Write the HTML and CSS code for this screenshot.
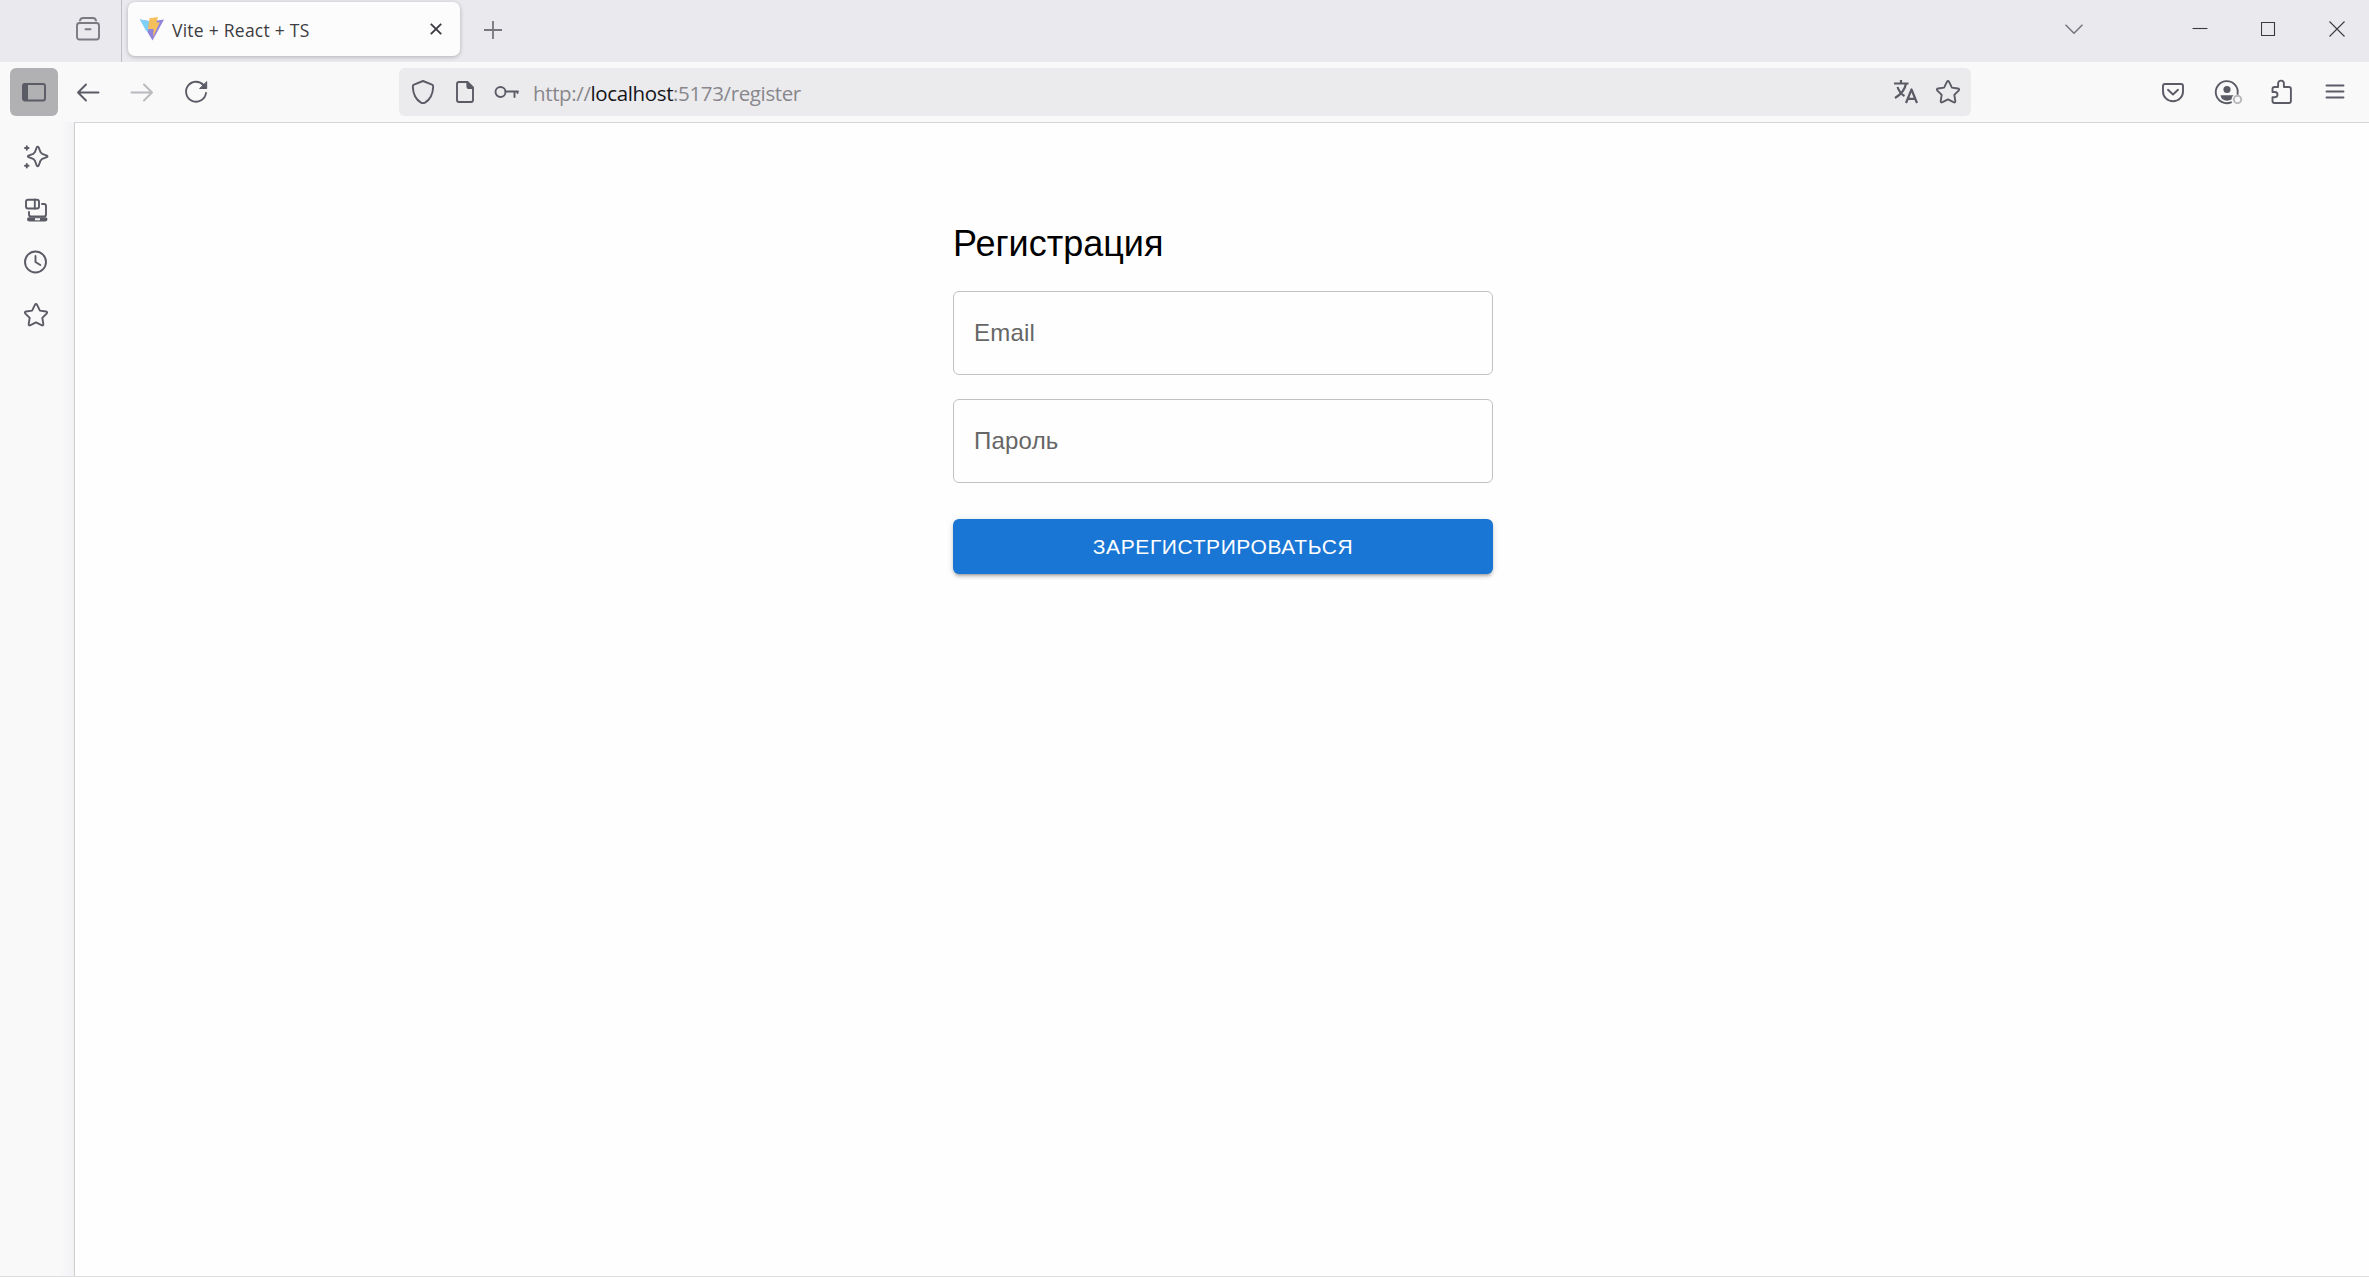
FILE: index.html
```html
<!DOCTYPE html>
<html lang="ru">
<head>
<meta charset="utf-8">
<title>Vite + React + TS</title>
<link rel="stylesheet" href="styles.css">
</head>
<body>
<div class="window">
  <header class="tabstrip">
    <div class="view-btn">
      <svg class="icon muted" viewBox="0 0 24 24"><path d="M4 3.600C4.400 1.900 5.500 1 7 1h10c1.500 0 2.600.9 3 2.600"/><rect x="1" y="6" width="22" height="16.500" rx="2.500"/><path d="M9.500 12.300h5"/></svg>
    </div>
    <div class="tab">
      <svg class="vite" viewBox="0 0 24 24"><path fill="#9183dc" d="M0 2.500l11 2 13-2L12.500 23.500z"/><path fill="#7fd0f8" d="M0 2.500l9 1.600-1 10.400-2.200-1z"/><path fill="#f5c05c" d="M9.500 1.300L18 0l-1.600 5.500 3.400-.3-6.800 14.800.6-8H8z"/></svg>
      <span class="tab-title">Vite + React + TS</span>
      <svg class="tab-close" viewBox="0 0 12 12"><path d="M.8.8l10.400 10.400M11.200.8L.8 11.200"/></svg>
    </div>
    <svg class="new-tab" viewBox="0 0 18 18"><path d="M9 0v18M0 9h18"/></svg>
    <div class="spacer"></div>
    <svg class="chevron" viewBox="0 0 18 10"><path d="M.5.700L9 9.200 17.500.7"/></svg>
    <div class="win-btn"><svg class="win-icon" viewBox="0 0 16 16"><path d="M.5 7.500h15"/></svg></div>
    <div class="win-btn"><svg class="win-icon" viewBox="0 0 16 16"><path d="M.5 1.500h13v13H.5z"/></svg></div>
    <div class="win-btn last"><svg class="win-icon" viewBox="0 0 16 16"><path d="M.5.500l15 15M15.500.500l-15 15"/></svg></div>
  </header>

  <nav class="toolbar">
    <div class="btn active"><svg class="icon" viewBox="0 0 24 24"><rect x="1" y="4" width="22" height="16.500" rx="2"/><path class="solid" d="M1 5q0-1.500 2-1.500h2.500v17H3q-2 0-2-1.500z"/></svg></div>
    <div class="btn"><svg class="icon" viewBox="0 0 24 24"><path d="M22.500 12.500H2M10 4.500l-8 8 8 8"/></svg></div>
    <div class="btn disabled"><svg class="icon" viewBox="0 0 24 24"><path d="M1.500 12.500H22M14 4.500l8 8-8 8"/></svg></div>
    <div class="btn"><svg class="icon" viewBox="0 0 24 24"><path d="M19.500 5A10 10 0 1 0 22 13"/><path class="solid" d="M22.700 2v6.500H16z"/></svg></div>
    <div class="urlbar">
      <div class="url-btn"><svg class="icon" viewBox="0 0 24 24"><path d="M12 1L21 4.600q1.300.5 1.200 2c-.3 8-3.200 13-8.200 16q-2 1-4 0c-5-3-7.900-8-8.200-16q-.1-1.500 1.200-2z"/></svg></div>
      <div class="url-btn"><svg class="icon" viewBox="0 0 24 24"><path d="M14.500 2H6Q4 2 4 4v16q0 2 2 2h12q2 0 2-2V7.500z"/><path class="solid" d="M14 2l6.500 6.500H15q-1 0-1-1z"/></svg></div>
      <div class="url-btn"><svg class="icon" viewBox="0 0 24 24"><circle cx="5.500" cy="12" r="5"/><path d="M10.500 11.500h12.500M19.500 12v5M22.500 12v1"/></svg></div>
      <span class="url">http://<span class="host">localhost</span>:5173/register</span>
      <div class="url-btn"><svg class="icon" viewBox="0 0 24 24"><path class="thick" d="M0 3.500h14.500M7 0v3.500M3.500 7C5 11.500 7 14 10.500 16M12 3.500C11 10 7.500 14 1 18"/><path class="thick" d="M12 23l5.500-13.500L23 23M13.500 18.800h8"/></svg></div>
      <div class="url-btn"><svg class="icon" viewBox="0 0 24 24"><path d="M10.900 1.900q1.100-1.800 2.200 0l2.800 5.700 6 .9q2.100.5.700 2.100l-4.300 4.300 1 6q.2 2.200-1.800 1.300L12 19.400l-5.500 2.800q-2 .9-1.800-1.300l1-6-4.300-4.300Q0 9 2.100 8.500l6-.9z"/></svg></div>
    </div>
    <div class="spacer"></div>
    <div class="btn"><svg class="icon" viewBox="0 0 24 24"><path d="M4 4h16q2 0 2 2v5.500a10 9.800 0 0 1-20 0V6q0-2 2-2z"/><path d="M7 9.800l5 4.700 5-4.700"/></svg></div>
    <div class="btn"><svg class="icon wide" viewBox="0 0 28 24"><path d="M22.600 14A11 11 0 1 0 16 22.300"/><circle class="fill" cx="12" cy="9.500" r="3.600"/><path class="fill" d="M5.500 15.200h13q-.7 1-1.500 1.800l-.5 2.600q-5 2.400-9.500-.6-1-1.500-1.500-3.800z"/><circle class="badge" cx="22.500" cy="19.500" r="3.700"/></svg></div>
    <div class="btn"><svg class="icon" viewBox="0 0 24 24"><path d="M3.500 12V9q0-2 2-2h3.600V3.500a2.900 2.900 0 0 1 5.800 0V7h5q2 0 2 2v12q0 2-2 2h-14.400q-2 0-2-2v-3.800h2.400a2.600 2.600 0 0 0 0-5.200z"/></svg></div>
    <div class="btn"><svg class="icon" viewBox="0 0 24 24"><path d="M3.500 5.500h17M3.500 11.500h17M3.500 17.500h17"/></svg></div>
  </nav>

  <div class="body">
    <aside class="sidebar">
      <svg class="icon" viewBox="0 0 24 24"><path d="M12.700 2.500q1-1.800 2 0l1.800 4.700 1.700 1.700 4.700 1.800q1.300.7 0 1.400l-4.700 1.800-1.700 1.700-1.800 4.900q-1 1.600-2 0l-1.800-4.900-1.700-1.700-4.700-1.800q-1.300-.7 0-1.400l4.700-1.800 1.700-1.700z"/><path d="M2.800 1.200v3.600M1 3h3.600M2.800 19v3.600M1 20.800h3.600"/></svg>
      <svg class="icon" viewBox="0 0 24 24"><rect x="2" y="1.700" width="13" height="8.800" rx="2"/><path d="M10.800 1.500v9M18 6h2q2 0 2 2v8.500q0 2-2 2H7q-2 0-2-2V14"/><path class="fill" fill-rule="evenodd" d="M5.500 19.200h16q2 0 2 2t-2 2.200h-16q-2.500 0-2.500-2.200t2.500-2zM11 20.300v2h5v-2z"/></svg>
      <svg class="icon" viewBox="0 0 24 24"><circle cx="11.500" cy="12" r="10.500"/><path d="M11.500 6v6l4.800 3"/></svg>
      <svg class="icon" viewBox="0 0 24 24"><path d="M10.900 1.900q1.100-1.800 2.200 0l2.800 5.700 6 .9q2.100.5.700 2.100l-4.300 4.300 1 6q.2 2.200-1.800 1.300L12 19.400l-5.500 2.800q-2 .9-1.800-1.300l1-6-4.300-4.300Q0 9 2.100 8.500l6-.9z"/></svg>
    </aside>
    <main class="page">
      <form class="form">
        <h1 class="heading">Регистрация</h1>
        <label class="field">Email</label>
        <label class="field">Пароль</label>
        <button class="submit" type="button">Зарегистрироваться</button>
      </form>
    </main>
  </div>
</div>
</body>
</html>
```
FILE: styles.css
```css
* { box-sizing: border-box; }
body { margin: 0; background: #f9f9fa; font-family: "Open Sans", "Noto Sans", sans-serif; }
.window { display: flex; flex-direction: column; height: 1277px; overflow: hidden; border-bottom: 1px solid #dededf; }
svg { display: block; flex: none; fill: none; }
.spacer { flex: 1; }

.icon { width: 24px; height: 24px; stroke: #5b5b66; stroke-width: 1.9; stroke-linejoin: round; stroke-linecap: round; overflow: visible; }
.icon.wide { width: 28px; margin-left: 4px; }
.icon.muted { stroke: #7b7a82; }
.icon .solid { fill: #5b5b66; stroke-width: 1; }
.icon .fill { fill: #5b5b66; stroke: none; }
.icon .thick { stroke-width: 2.2; stroke-linecap: butt; }
.icon .badge { stroke: #b9b9bd; stroke-width: 2; }

.tabstrip { display: flex; height: 62px; flex: none; background: #eae9ee; }
.view-btn { width: 122px; padding: 17px 0 0 76px; border-right: 1px solid #bfbec6; }
.tab { display: flex; align-items: center; width: 332px; height: 54px; margin: 2px 0 0 6px; padding: 0 18px 0 12px; border-radius: 7px; background: #fcfcfc; box-shadow: 0 1px 4px rgba(0, 0, 0, .25); }
.vite { width: 24px; height: 24px; }
.tab-title { flex: 1; padding-top: 1px; margin-left: 8px; font-size: 17.500px; letter-spacing: .25px; line-height: 24px; color: #3d3c42; white-space: nowrap; }
.tab-close { width: 12px; height: 12px; stroke: #3d3c42; stroke-width: 1.9; }
.new-tab { width: 18px; height: 18px; margin: 21px 0 0 23.500px; stroke: #77767d; stroke-width: 1.8; }
.chevron { width: 18px; height: 10px; margin: 24px 82px 0 0; stroke: #77767d; stroke-width: 1.6; }
.win-btn { display: flex; justify-content: center; width: 69px; padding-top: 21px; }
.win-btn.last { width: 66px; padding-left: 2px; }
.win-icon { width: 16px; height: 16px; stroke: #3b3a40; stroke-width: 1.1; }

.toolbar { display: flex; align-items: center; gap: 6px; flex: none; height: 60px; padding: 0 10px; }
.btn { display: flex; align-items: center; justify-content: center; width: 48px; height: 48px; border-radius: 6px; }
.btn.active { background: #b1b1b4; }
.btn.disabled { opacity: .4; }
.urlbar { display: flex; align-items: center; width: 1572px; height: 48px; margin-left: 173px; padding: 0 2px 0 3px; border-radius: 6px; background: #ebebed; }
.url-btn { display: flex; justify-content: center; width: 42px; }
.url { flex: 1; padding: 2px 0 0 5px; font-size: 20.500px; letter-spacing: -.37px; line-height: 28px; color: #88878c; white-space: nowrap; }
.host { color: #15141a; }

.body { display: flex; flex: 1; min-height: 0; }
.sidebar { display: flex; flex-direction: column; gap: 28.700px; width: 74px; flex: none; padding: 23px 0 0 24px; background: linear-gradient(90deg, #f9f9fa 80%, #f2f2f5); }
.page { flex: 1; padding: 96px 0 0 2px; border-top: 1px solid #d6d6da; border-left: 1px solid #cdcdd0; background: #fefefe; }
.form { display: flex; flex-direction: column; width: 540px; margin: 0 auto; font-family: "Liberation Sans", Arial, sans-serif; }
.heading { margin: 0 0 24px; padding-top: 1px; font-size: 36px; font-weight: 400; line-height: 47px; color: #000; }
.field { height: 84px; margin-bottom: 24px; padding: 0 20px; border: 1px solid #c2c2c2; border-radius: 6px; font-size: 24px; letter-spacing: .22px; line-height: 82px; color: #666; }
.submit { height: 55px; margin-top: 12px; padding: 0; border: 0; border-radius: 6px; background: #1976d4; color: #fff; font: 21px/55px "Liberation Sans", Arial, sans-serif; letter-spacing: .6px; text-transform: uppercase; box-shadow: 0 4px 2px -3px rgba(0, 0, 0, .2), 0 3px 3px rgba(0, 0, 0, .14), 0 1px 7px rgba(0, 0, 0, .12); }
```
